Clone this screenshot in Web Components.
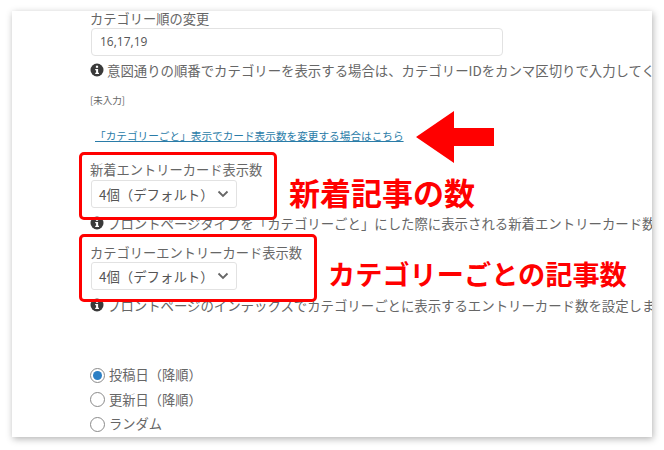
<!DOCTYPE html>
<html lang="ja"><head><meta charset="utf-8">
<style>
html,body{margin:0;padding:0;background:#fff;width:664px;height:450px;overflow:hidden}
body{font-family:"Noto Sans CJK JP","Noto Sans",sans-serif;color:#666}
</style></head><body>
<template id="t-card"><style>
:host{display:block;position:absolute;left:12px;top:11px;width:640px;height:426px;background:#fff;box-shadow:1px 2px 7px rgba(0,0,0,.3);overflow:hidden}
.c{display:flex;flex-direction:column;padding:0 0 0 78px;white-space:nowrap}
</style><div class="c"><slot></slot></div><slot name="over"></slot></template>

<template id="t-field"><style>
:host{display:block;margin-top:var(--mt,0)}
.l{font-size:13.25px;line-height:16px;color:#666;display:block;height:var(--lh,16px)}
</style><span class="l"><slot name="label"></slot></span><slot></slot></template>

<template id="t-text"><style>
:host{display:block;box-sizing:border-box;width:412px;height:28px;margin:1px 0 0 1px;border:1px solid #e2e2e2;border-radius:4px;font:12px/26px "Open Sans","Noto Sans",sans-serif;color:#555;padding-left:8px;background:#fff}
</style><slot></slot></template>

<template id="t-select"><style>
:host{display:flex;align-items:center;justify-content:space-between;box-sizing:border-box;width:146px;height:28px;margin:0 0 0 1px;border:1px solid #e2e2e2;border-radius:3px;font-size:13.4px;line-height:26px;color:#555;padding:0 7px 0 7px;background:#fff}
svg{display:block;flex:none}
</style><span><slot></slot></span><svg width="12" height="8" viewBox="0 0 12 8"><path d="M1.5 1.5 6 6l4.5-4.5" fill="none" stroke="#666" stroke-width="1.8"/></svg></template>

<template id="t-help"><style>
:host{display:flex;align-items:center;gap:3px;font-size:13.4px;line-height:18px;height:18px;color:#666;margin-top:var(--mt,0)}
svg{flex:none;display:block}
</style><svg width="14" height="14" viewBox="0 0 14 14"><circle cx="7" cy="7" r="6.5" fill="#3a3a3a"/><rect x="5.9" y="2.7" width="2.2" height="2.1" fill="#fff"/><path d="M5.2 6h2.9v3.8h.9v1.2H5.2V9.8h.9V7.2h-.9z" fill="#fff"/></svg><span><slot></slot></span></template>

<template id="t-radio"><style>
:host{display:flex;align-items:center;gap:4px;font-size:13.25px;line-height:24.5px;height:24.5px;color:#666}
.r{box-sizing:border-box;width:15px;height:15px;border-radius:50%;border:1.3px solid #8a8a8a;display:flex;align-items:center;justify-content:center;background:#fff}
:host([checked]) .r::after{content:"";width:9px;height:9px;border-radius:50%;background:#2c7fc4}
</style><span class="r"></span><span><slot></slot></span></template>

<template id="t-box"><style>
:host{display:block;position:absolute;box-sizing:border-box;border:3.5px solid #f00;border-radius:5px}
</style></template>

<template id="t-note"><style>
:host{display:block;position:absolute;color:#f00;font-weight:700;font-size:var(--fs,27px);line-height:36px;white-space:nowrap;font-family:"Noto Sans CJK JP",sans-serif}
</style><slot></slot></template>

<template id="t-arrow"><style>
:host{display:block;position:absolute}
svg{display:block}
</style><svg width="78" height="52" viewBox="0 0 78 52"><path d="M0 26 38 0V17H78V35H38V52z" fill="#f00"/></svg></template>

<x-card>
  <x-field><span slot="label">カテゴリー順の変更</span><x-text>16,17,19</x-text></x-field>
  <x-help style="--mt:5px">意図通りの順番でカテゴリーを表示する場合は、カテゴリーIDをカンマ区切りで入力してください。</x-help>
  <span style="display:block;font-size:9.5px;line-height:14px;margin-top:14px;color:#666">[未入力]</span>
  <a style="display:block;font-size:10.65px;line-height:16px;margin:21px 0 0 5px;color:#2a7ca8;text-decoration:underline;width:max-content">「カテゴリーごと」表示でカード表示数を変更する場合はこちら</a>
  <x-field style="--mt:18px;--lh:18px"><span slot="label">新着エントリーカード表示数</span><x-select>4個（デフォルト）</x-select></x-field>
  <x-help style="--mt:6px">フロントページタイプを「カテゴリーごと」にした際に表示される新着エントリーカード数を設定します。</x-help>
  <x-field style="--mt:13px;--lh:17px"><span slot="label">カテゴリーエントリーカード表示数</span><x-select>4個（デフォルト）</x-select></x-field>
  <x-help style="--mt:6px">フロントページのインデックスでカテゴリーごとに表示するエントリーカード数を設定します。</x-help>
  <div style="height:49px"></div>
  <x-radio checked>投稿日（降順）</x-radio>
  <x-radio>更新日（降順）</x-radio>
  <x-radio>ランダム</x-radio>
  <x-box slot="over" style="left:67px;top:141px;width:198px;height:68px"></x-box>
  <x-box slot="over" style="left:67px;top:223px;width:238px;height:68px"></x-box>
  <x-arrow slot="over" style="left:404px;top:100px"></x-arrow>
  <x-note slot="over" style="left:277px;top:163px;--fs:31px">新着記事の数</x-note>
  <x-note slot="over" style="left:316px;top:244px;--fs:27.2px">カテゴリーごとの記事数</x-note>
</x-card>
<script>
for (const [n,id] of [["x-card","t-card"],["x-field","t-field"],["x-text","t-text"],["x-select","t-select"],["x-help","t-help"],["x-radio","t-radio"],["x-box","t-box"],["x-note","t-note"],["x-arrow","t-arrow"]]) {
  customElements.define(n, class extends HTMLElement {
    constructor(){super();this.attachShadow({mode:"open"}).appendChild(document.getElementById(id).content.cloneNode(true));}
  });
}
</script>
</body></html>
